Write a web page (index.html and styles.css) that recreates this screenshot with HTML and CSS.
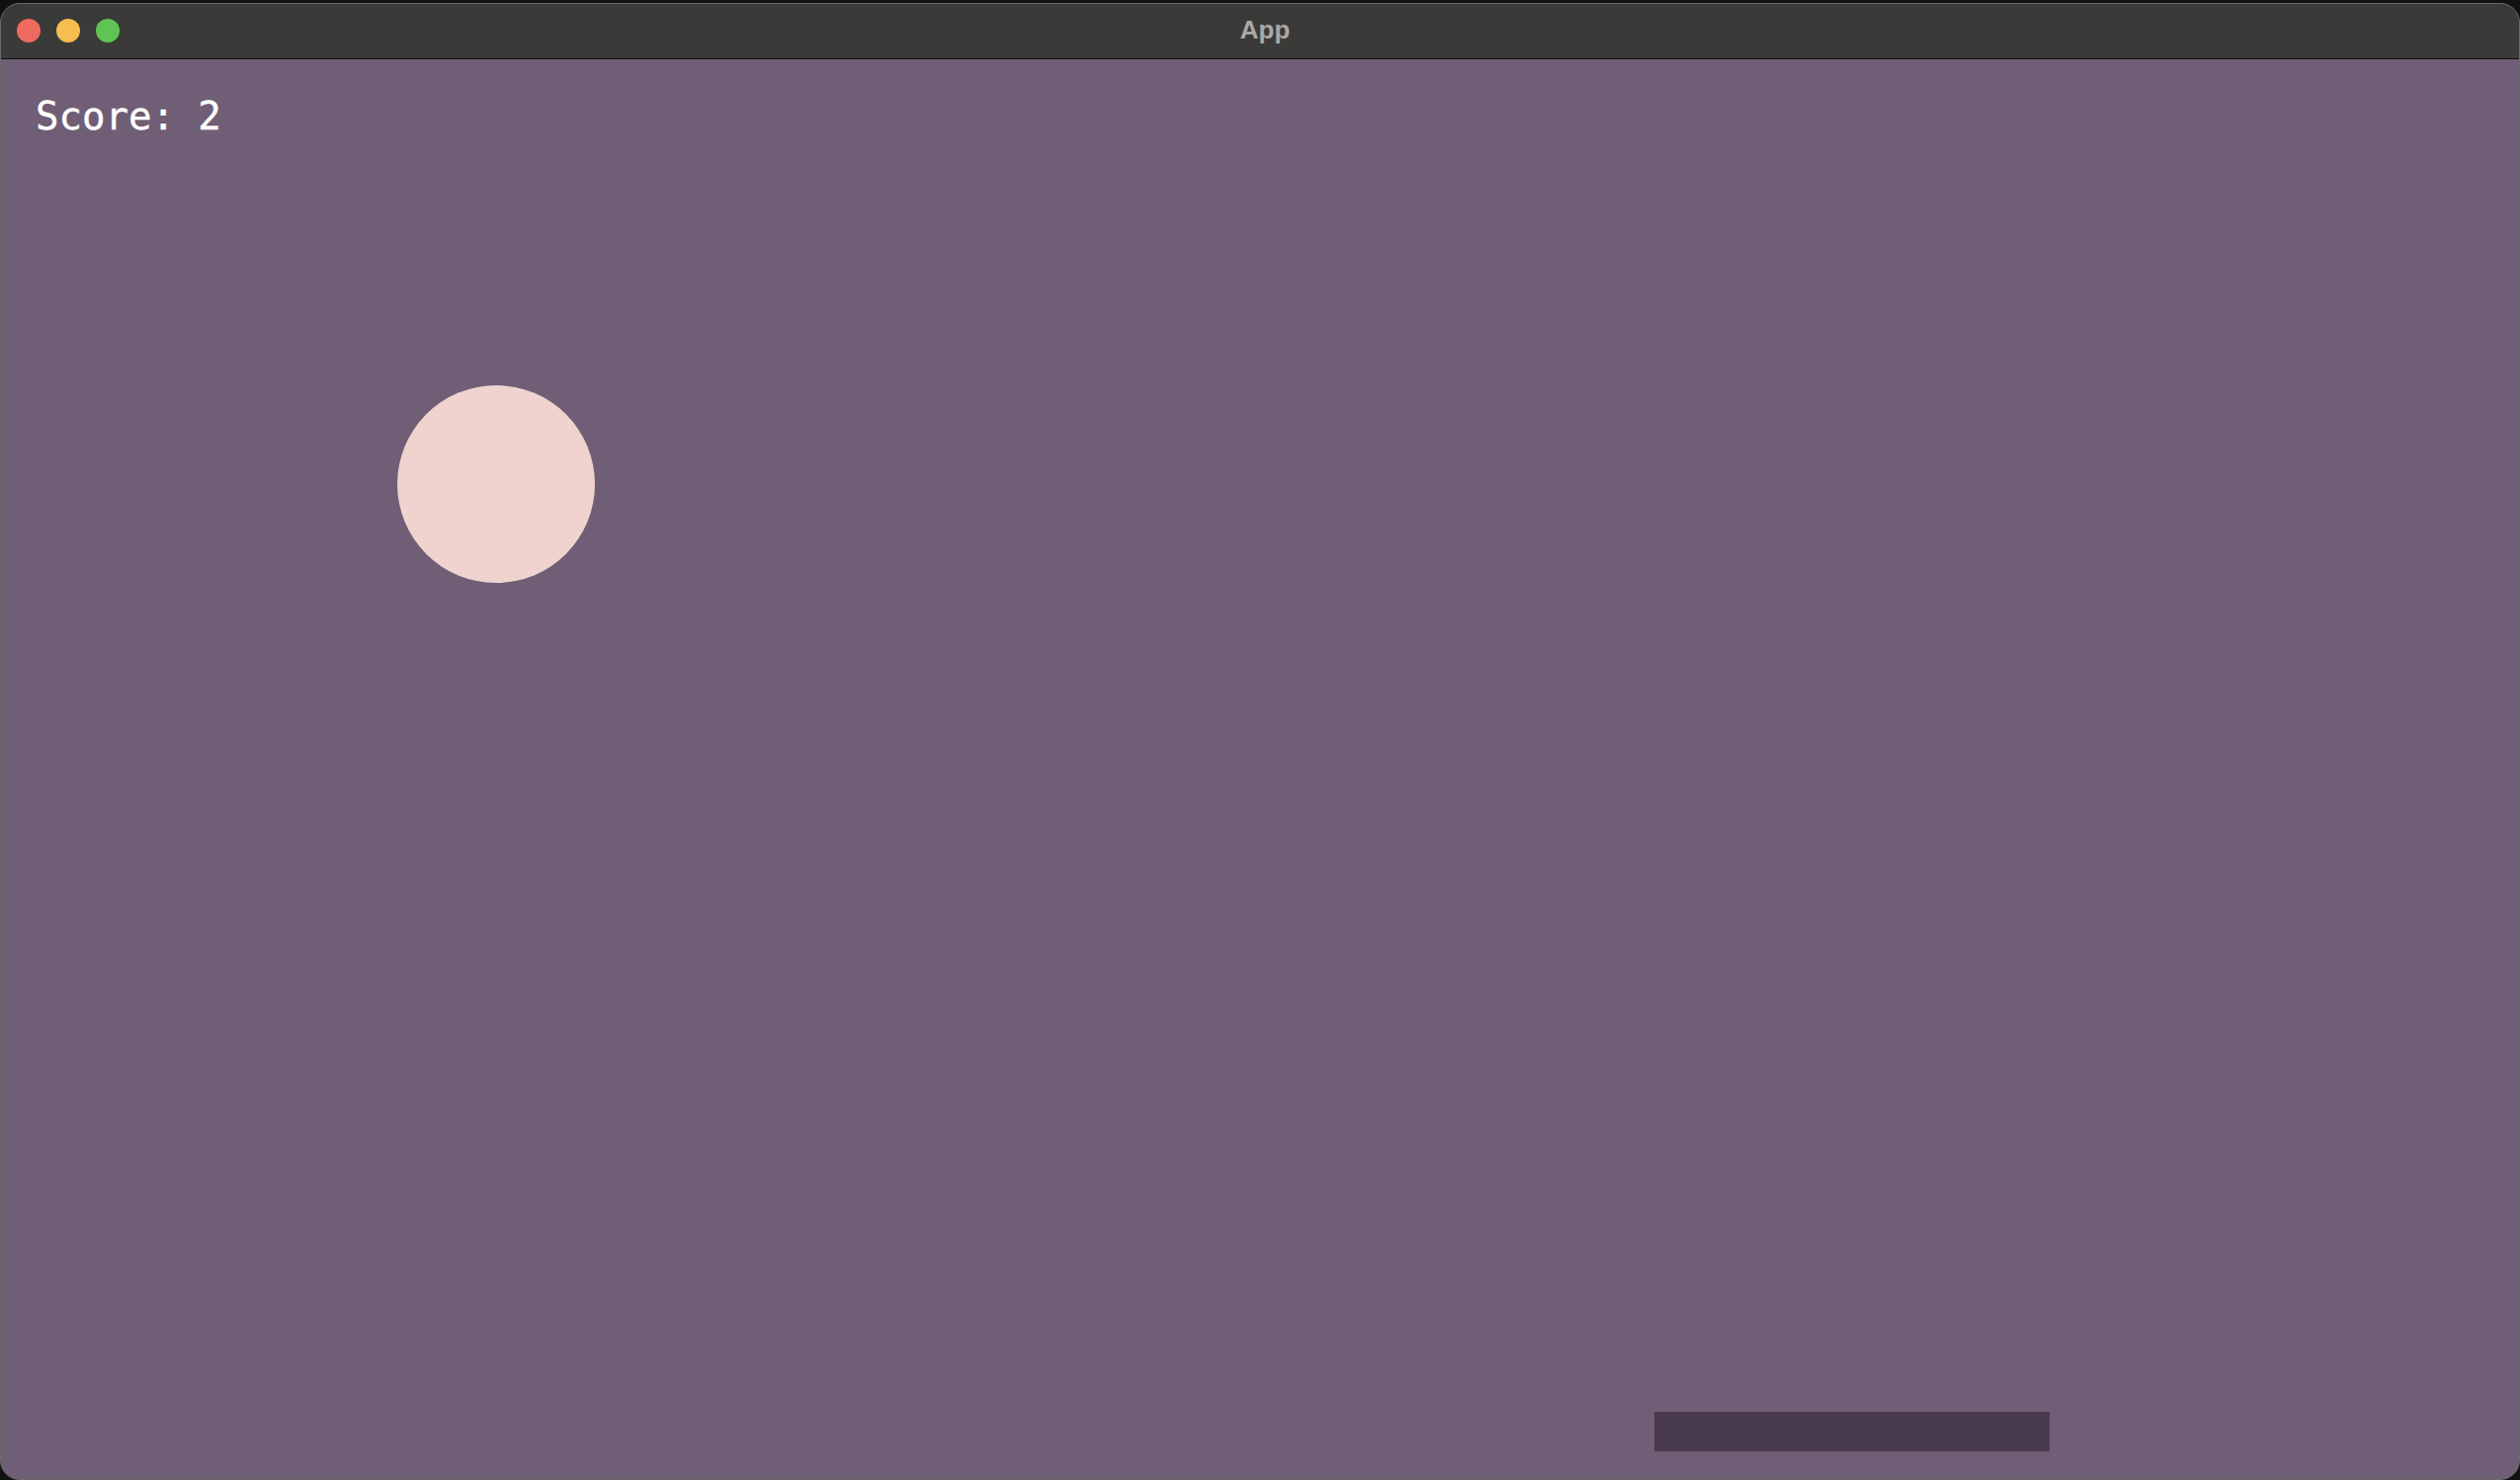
FILE: index.html
```html
<!DOCTYPE html>
<html>
<head>
<meta charset="utf-8">
<title>App</title>
<link rel="stylesheet" href="styles.css">
</head>
<body>
<div class="window">
  <div class="titlebar">
    <div class="lights">
      <span class="light red"></span>
      <span class="light yellow"></span>
      <span class="light green"></span>
    </div>
    <div class="title">App</div>
  </div>
  <div class="game">
    <div class="score">Score: 2</div>
    <div class="ball"></div>
    <div class="paddle"></div>
  </div>
</div>
</body>
</html>
```
FILE: styles.css
```css
html, body {
  margin: 0;
  padding: 0;
  background: #111;
  width: 2550px;
  height: 1498px;
  overflow: hidden;
}
.window {
  margin-top: 3px;
  height: 1495px;
  box-sizing: border-box;
  border: 1px solid #6a6a6a;
  border-radius: 20px;
  overflow: hidden;
  display: flex;
  flex-direction: column;
  background: #6f5e75;
}
.titlebar {
  height: 55px;
  flex: 0 0 auto;
  background: #3a3a38;
  border-bottom: 1px solid #0e0e0e;
  position: relative;
  display: flex;
  align-items: center;
  justify-content: center;
}
.lights {
  position: absolute;
  left: 16px;
  top: 15px;
  display: flex;
  gap: 16px;
}
.light {
  width: 24px;
  height: 24px;
  border-radius: 50%;
  display: block;
}
.red { background: #ee6a5f; }
.yellow { background: #f5be4f; }
.green { background: #5fc454; }
.title {
  font-family: "Liberation Sans", Arial, sans-serif;
  font-weight: bold;
  font-size: 26px;
  color: #a9a9a7;
  margin-left: 10px;
  margin-top: -2px;
}
.game {
  flex: 1 1 auto;
  position: relative;
  background: #6f5e75;
}
.score {
  padding: 38px 0 0 35px;
  font-family: "DejaVu Sans Mono", monospace;
  font-size: 39px;
  line-height: 1;
  color: #ffffff;
  -webkit-text-stroke: 0.4px #ffffff;
}
.ball {
  position: absolute;
  left: 401px;
  top: 330px;
  width: 200px;
  height: 200px;
  border-radius: 50%;
  background: #f0d2cf;
}
.paddle {
  position: absolute;
  left: 1673px;
  top: 1369px;
  width: 400px;
  height: 40px;
  background: #493a4d;
}
```
